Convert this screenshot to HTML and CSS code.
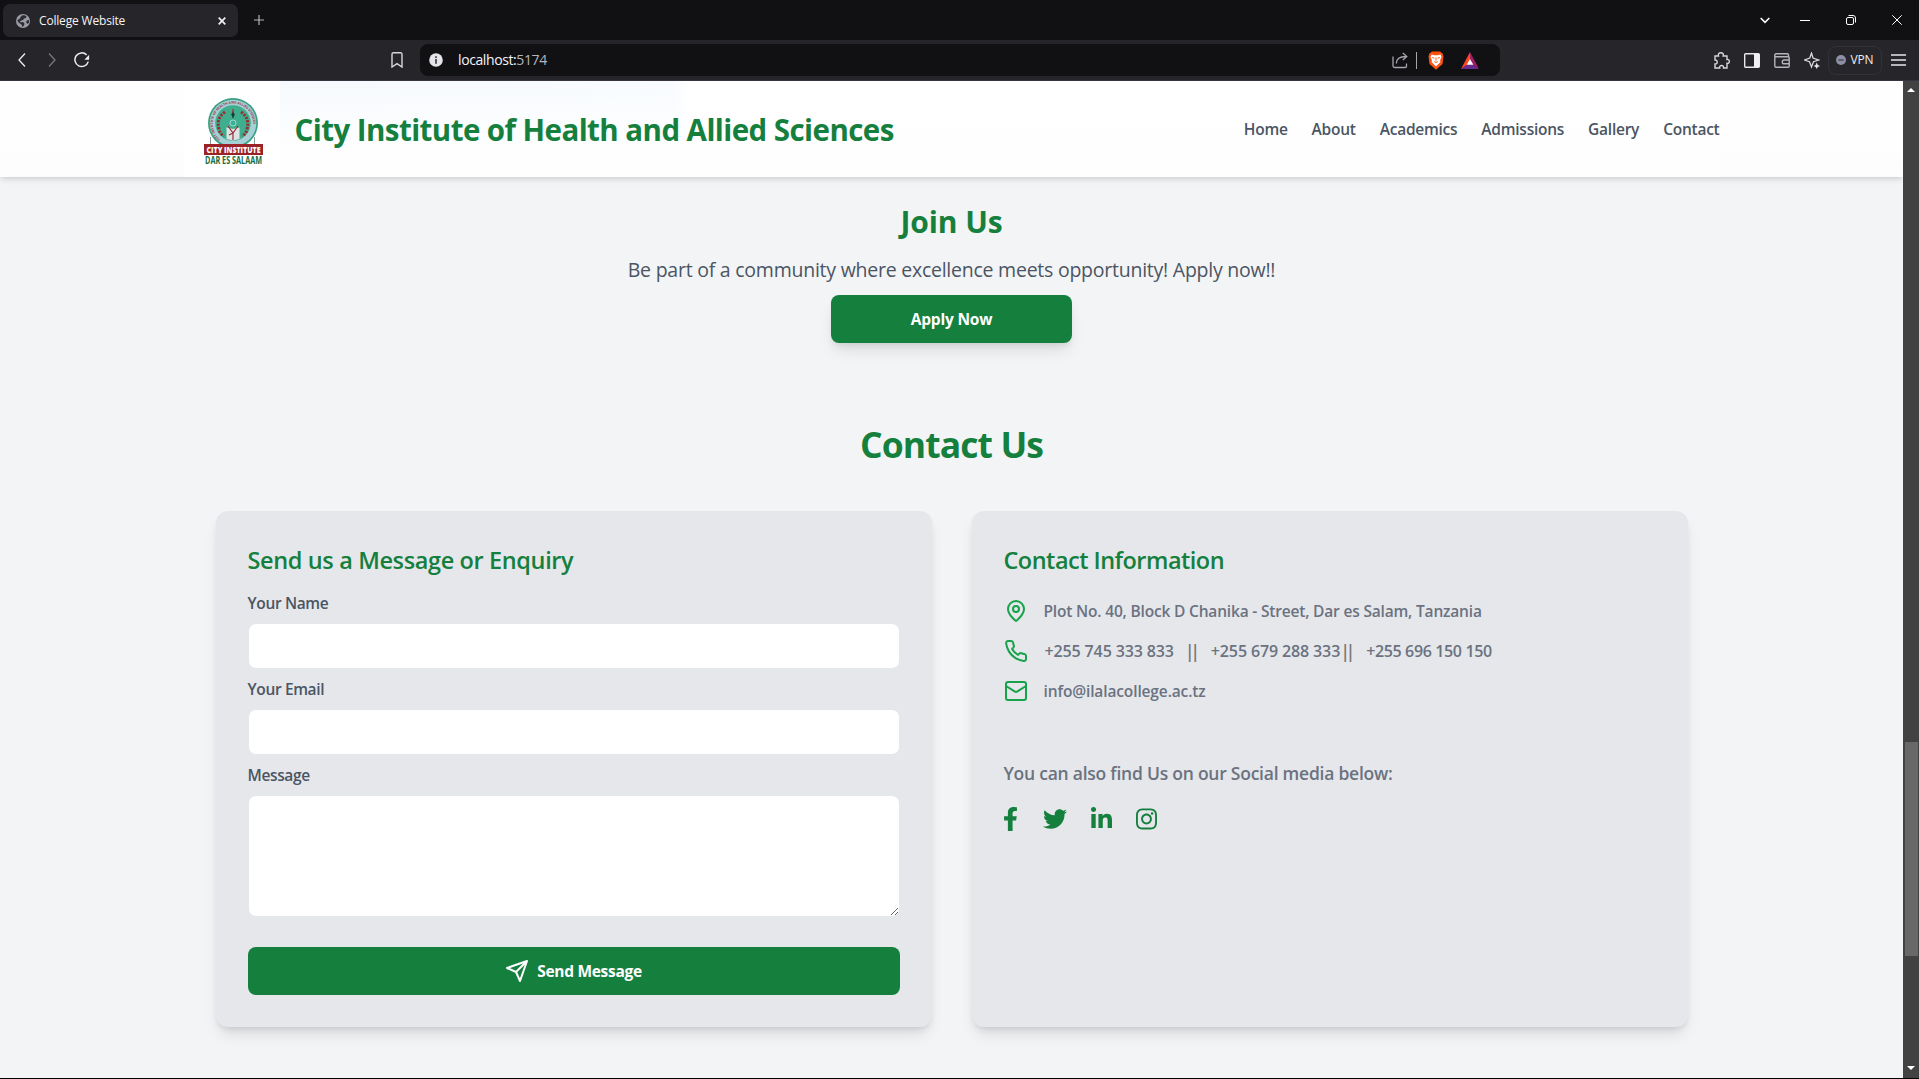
FILE: index.html
```html
<!DOCTYPE html>
<html lang="en">
<head>
<meta charset="utf-8">
<title>College Website</title>
<link rel="stylesheet" href="styles.css">
</head>
<body>
<div class="tabstrip">
  <div class="tab">
    <svg class="favicon" width="14" height="14" viewBox="0 0 14 14"><circle cx="7" cy="7" r="7" fill="#9a9ba3"/><path d="M6.500 1.200C8 1 9.600 1.500 10.500 2.200L10 4 8 4.500 7 6 4 7 4.500 8.500 7 8 8.500 9.500 8 11.500 6.500 13 5.500 10.500 2.500 8.500 1.200 6 3.500 5 4.500 3z M11 6.500l2-.5v2.500L11.500 10 10 8z" fill="#2b2b31"/></svg>
    <span class="tab-title">College Website</span>
    <svg class="tab-close" width="8" height="8" viewBox="0 0 8 8"><path d="M.7.7l6.600 6.600M7.300.7L.7 7.300" stroke="#f0f0f2" stroke-width="1.700"/></svg>
  </div>
  <svg class="new-tab" width="10" height="10" viewBox="0 0 10 10"><path d="M5 0v10M0 5h10" stroke="#b4b4ba" stroke-width="1.200"/></svg>
  <div class="window-controls">
    <svg width="10" height="7" viewBox="0 0 10 7"><path d="M.7 1L5 5.300 9.300 1" fill="none" stroke="#fff" stroke-width="1.600"/></svg>
    <svg width="10" height="10" viewBox="0 0 10 10"><path d="M0 5.500h10" stroke="#fff"/></svg>
    <svg width="10" height="10" viewBox="0 0 10 10" fill="none" stroke="#fff"><rect x=".5" y="2.500" width="7" height="7" rx="1.500"/><path d="M2.500.5H7a2.500 2.500 0 0 1 2.500 2.500v4.500"/></svg>
    <svg width="10" height="10" viewBox="0 0 10 10"><path d="M.3.3l9.400 9.400M9.700.3L.3 9.700" stroke="#fff"/></svg>
  </div>
</div>
<div class="toolbar">
  <div class="nav-buttons">
    <svg width="8" height="14" viewBox="0 0 8 14"><path d="M7 .5L1 7l6 6.500" fill="none" stroke="#f0f0f2" stroke-width="1.300"/></svg>
    <svg width="8" height="14" viewBox="0 0 8 14"><path d="M1 .5L7 7l-6 6.500" fill="none" stroke="#77777d" stroke-width="1.300"/></svg>
    <svg width="16" height="16" viewBox="0 0 15 15"><path d="M11.800 2.700A6.400 6.400 0 1 0 13.400 9" fill="none" stroke="#f0f0f2" stroke-width="1.400"/><path d="M14.200 2.500v4.800H9.800z" fill="#f0f0f2"/></svg>
  </div>
  <svg class="bookmark" width="12" height="16" viewBox="0 0 12 16"><path d="M1 2.200A1.400 1.400 0 0 1 2.400.8h7.200A1.400 1.400 0 0 1 11 2.200V15l-5-3.300L1 15z" fill="none" stroke="#d8d8dc" stroke-width="1.400"/></svg>
  <div class="address">
    <svg width="14" height="14" viewBox="0 0 14 14"><circle cx="7" cy="7" r="6.800" fill="#e6e6ea"/><path d="M7 3.200v1.800M7 6v4.700" stroke="#3c3c42" stroke-width="1.700"/></svg>
    <span class="url">localhost:<span class="port">5174</span></span>
    <div class="address-icons">
      <svg width="17" height="17" viewBox="0 0 17 17" fill="none" stroke="#a5a5ab" stroke-width="1.300"><path d="M1 4.500v9.300A1.700 1.700 0 0 0 2.700 15.500h10.600a1.200 1.200 0 0 0 1.200-1.200V11.500M4.300 11.500c0-4.700 3-7 9.700-7M10.800 1l4 3.500-4 3.500"/></svg>
      <span class="divider"></span>
      <svg width="16" height="19" viewBox="0 0 16 19"><path d="M4 .5h8L14.200 2.300 15.500 5 14.500 13 8 18.700 1.500 13 .5 5 1.800 2.300z" fill="#fb5210"/><path d="M3.500 3.500l3 .8h3l3-.8 1 2.500-1.500 3.500.5 1.500L8 15.500 3.500 11l.5-1.500L2.500 6z" fill="#fff"/><path d="M4.300 6.500l2 .7M11.700 6.500l-2 .7M8 6.500v3M6.300 10.500L8 11.500l1.700-1" stroke="#fb5210" fill="none"/></svg>
      <svg width="18" height="17" viewBox="0 0 18 17"><path d="M9 0L0 17l9-6z" fill="#ff4724"/><path d="M9 0l9 17-9-6z" fill="#9e1f63"/><path d="M0 17h18l-9-6z" fill="#662d91"/><path d="M9 7l3.300 5.800H5.700z" fill="#fff"/></svg>
    </div>
  </div>
  <div class="extensions">
    <svg width="16" height="17" viewBox="0 0 16 17"><path d="M1 4h3.500C3.800 1.800 5 .8 6.800.8S9.800 1.800 9.200 4H13v3.500c1.500-.4 2.300.5 2.300 1.900S14.500 11.700 13 11.300V16H9.500c.3-1.700-.5-2.500-1.900-2.500S5.300 14.300 5.700 16H1v-4c1.500.2 2.200-.7 2.200-2S2.500 7.800 1 8z" fill="none" stroke="#d8d8dc" stroke-width="1.400"/></svg>
    <svg width="16" height="15" viewBox="0 0 16 15"><rect x=".7" y=".7" width="14.600" height="13.600" rx="1" fill="none" stroke="#e8e8ec" stroke-width="1.400"/><path d="M10 1h5.500v13H10z" fill="#f0f0f2"/></svg>
    <svg width="16" height="15" viewBox="0 0 16 15" fill="none" stroke="#b4b4ba" stroke-width="1.400"><path d="M14.500 4V2A1.200 1.200 0 0 0 13.300.8H2A1.200 1.200 0 0 0 .8 2v11A1.200 1.200 0 0 0 2 14.200h12A1.200 1.200 0 0 0 15.200 13V5A1.200 1.200 0 0 0 14 3.800H1M15 7h-4.800a1.900 1.900 0 0 0 0 3.800H15"/></svg>
    <svg width="16" height="17" viewBox="0 0 16 17"><path d="M7.500 1L9 6l5.500 2-5 1.700L7.500 15l-2-5.300-5-1.700 5.300-2z" fill="none" stroke="#d8d8dc" stroke-width="1.300"/><path d="M12.700 10.500l1 2.500 2.300 1-2.300.9-1 2.100-1-2.100-2-.9 2-1z" fill="#e8e8ec"/></svg>
    <div class="vpn"><svg width="10" height="10" viewBox="0 0 10 10"><circle cx="5" cy="5" r="5" fill="#8d8fa6"/><path d="M2.300 5h5.400" stroke="#3c3c48" stroke-width="1.200"/></svg><span>VPN</span></div>
    <svg width="15" height="12" viewBox="0 0 15 12"><path d="M0 1h15M0 6h15M0 11h15" stroke="#e8e8ec" stroke-width="1.300"/></svg>
  </div>
</div>
<div class="viewport">
  <div class="page">
    <header class="site-header">
      <div class="header-inner">
        <div class="logo">
          <svg width="96" height="96" viewBox="0 0 96 96">
            <path d="M26.500 56v9M70.500 56v9" stroke="#8d9a98" stroke-width="1"/>
            <circle cx="49" cy="42" r="25" fill="#37a183"/>
            <circle cx="49" cy="42" r="23.300" fill="#a6cfd6"/>
            <circle cx="49" cy="42" r="17.800" fill="#3fae8f"/>
            <path id="ring" d="M36 58.200A20.200 20.200 0 1 1 62 58.200" fill="none"/>
            <text class="ring-text"><textPath href="#ring">CITY INSTITUTE OF HEALTH AND ALLIED SCIENCES</textPath></text>
            <path d="M41 31Q32 37 35 48Q36 53 40 55M57 31Q66 37 63 48Q62 53 58 55" fill="none" stroke="#9a2b30" stroke-width="3" stroke-dasharray="2.200 1.300"/>
            <path d="M42.500 46.500l6.500 1.500 6.500-1.500V58l-6.500 1.500L42.500 58z" fill="#dde4e6"/>
            <path d="M44 45l5 7 5-7M49 52v7M45 54l4-2" fill="none" stroke="#9a2b30" stroke-width="1.200"/>
            <circle cx="49" cy="42" r="3" fill="none" stroke="#9bd5dc"/>
            <path d="M49 30l-1.700 3.500L49 38l1.700-4.500z" fill="#1d3b35"/><path d="M49 28v4" stroke="#b3282d" stroke-width="1.200"/>
            <path d="M20 63h59v11H20z" fill="#9b2226"/>
            <text class="logo-name" x="49.500" y="71.800" textLength="54" lengthAdjust="spacingAndGlyphs">CITY INSTITUTE</text>
            <text class="logo-place" x="49.500" y="83.400" textLength="57" lengthAdjust="spacingAndGlyphs">DAR ES SALAAM</text>
          </svg>
        </div>
        <h1 class="site-title">City Institute of Health and Allied Sciences</h1>
        <nav class="site-nav"><a>Home</a><a>About</a><a>Academics</a><a>Admissions</a><a>Gallery</a><a>Contact</a></nav>
      </div>
    </header>
    <section class="join">
      <h2 class="join-title">Join Us</h2>
      <p class="join-text">Be part of a community where excellence meets opportunity! Apply now!!</p>
      <button class="apply">Apply Now</button>
    </section>
    <section class="contact">
      <h2 class="contact-title">Contact Us</h2>
      <div class="cards">
        <form class="card">
          <h3 class="card-title">Send us a Message or Enquiry</h3>
          <label class="label">Your Name</label>
          <input class="field" type="text">
          <label class="label">Your Email</label>
          <input class="field" type="email">
          <label class="label">Message</label>
          <textarea class="field area"></textarea>
          <button class="send" type="button">
            <svg width="24" height="24" viewBox="0 0 24 24" fill="none" stroke="#fff" stroke-width="2" stroke-linecap="round" stroke-linejoin="round"><path d="M22 2L15 22l-4-9-9-4zM22 2L11 13"/></svg>
            <span>Send Message</span>
          </button>
        </form>
        <div class="card">
          <h3 class="card-title info-title">Contact Information</h3>
          <div class="info">
            <div class="row"><svg class="ico" viewBox="0 0 24 24"><path d="M20 10c0 6-8 12-8 12s-8-6-8-12a8 8 0 0 1 16 0z"/><circle cx="12" cy="10" r="3"/></svg><span class="street">Plot No. 40, Block D Chanika - Street, Dar es Salam, Tanzania</span></div>
            <div class="row"><svg class="ico" viewBox="0 0 24 24"><path d="M22 16.920v3a2 2 0 0 1-2.180 2 19.790 19.790 0 0 1-8.630-3.070 19.500 19.500 0 0 1-6-6 19.790 19.790 0 0 1-3.070-8.670A2 2 0 0 1 4.110 2h3a2 2 0 0 1 2 1.720 12.840 12.840 0 0 0 .7 2.810 2 2 0 0 1-.45 2.110L8.090 9.910a16 16 0 0 0 6 6l1.270-1.270a2 2 0 0 1 2.110-.45 12.840 12.840 0 0 0 2.810.7A2 2 0 0 1 22 16.920z"/></svg><span class="phone">+255 745 333 833</span><span class="bars wide">||</span><span class="phone">+255 679 288 333</span><span class="bars">||</span><span class="phone last">+255 696 150 150</span></div>
            <div class="row"><svg class="ico" viewBox="0 0 24 24"><rect x="2" y="3" width="20" height="18" rx="2"/><path d="M22 7l-8.970 5.700a1.940 1.940 0 0 1-2.060 0L2 7"/></svg><span class="mail">info@ilalacollege.ac.tz</span></div>
          </div>
          <p class="social-text">You can also find Us on our Social media below:</p>
          <div class="social">
            <svg width="15" height="24" viewBox="0 0 320 512"><path d="M279.140 288l14.220-92.660h-88.910v-60.130c0-25.350 12.420-50.060 52.240-50.060h40.420V6.260S260.430 0 225.360 0c-73.220 0-121.080 44.380-121.080 124.720v70.620H22.890V288h81.390v224h100.170V288z"/></svg>
            <svg width="24" height="24" viewBox="0 0 512 512"><path d="M459.370 151.716c.325 4.548.325 9.097.325 13.645 0 138.720-105.583 298.558-298.558 298.558-59.452 0-114.680-17.219-161.137-47.106 8.447.974 16.568 1.299 25.340 1.299 49.055 0 94.213-16.568 130.274-44.832-46.132-.975-84.792-31.188-98.112-72.772 6.498.974 12.995 1.624 19.818 1.624 9.421 0 18.843-1.300 27.614-3.573-48.081-9.747-84.143-51.980-84.143-102.985v-1.299c13.969 7.797 30.214 12.670 47.431 13.319-28.264-18.843-46.781-51.005-46.781-87.391 0-19.492 5.197-37.360 14.294-52.954 51.655 63.675 129.300 105.258 216.365 109.807-1.624-7.797-2.599-15.918-2.599-24.040 0-57.828 46.782-104.934 104.934-104.934 30.213 0 57.502 12.670 76.670 33.137 23.715-4.548 46.456-13.320 66.599-25.340-7.798 24.366-24.366 44.833-46.132 57.827 21.117-2.273 41.584-8.122 60.426-16.243-14.292 20.791-32.161 39.308-52.628 54.253z"/></svg>
            <svg width="21" height="24" viewBox="0 0 448 512"><path d="M100.280 448H7.400V148.900h92.880zM53.790 108.100C24.090 108.100 0 83.500 0 53.800a53.790 53.790 0 0 1 107.580 0c0 29.700-24.100 54.300-53.790 54.300zM447.900 448h-92.680V302.400c0-34.700-.7-79.200-48.290-79.200-48.290 0-55.690 37.700-55.690 76.700V448h-92.780V148.900h89.080v40.800h1.300c12.400-23.500 42.690-48.300 87.880-48.300 94 0 111.280 61.900 111.280 142.300V448z"/></svg>
            <svg width="21" height="24" viewBox="0 0 448 512"><path d="M224.100 141c-63.600 0-114.900 51.300-114.900 114.900s51.300 114.900 114.900 114.900S339 319.500 339 255.900 287.700 141 224.100 141zm0 189.600c-41.100 0-74.700-33.500-74.700-74.700s33.500-74.700 74.700-74.700 74.700 33.500 74.700 74.700-33.600 74.700-74.700 74.700zm146.400-194.300c0 14.900-12 26.800-26.800 26.800-14.900 0-26.800-12-26.800-26.800s12-26.800 26.800-26.800 26.800 12 26.800 26.800zm76.100 27.200c-1.700-35.900-9.900-67.700-36.200-93.900-26.200-26.200-58-34.400-93.900-36.200-37-2.100-147.900-2.100-184.900 0-35.800 1.700-67.600 9.900-93.900 36.100s-34.400 58-36.200 93.900c-2.100 37-2.100 147.900 0 184.900 1.700 35.900 9.900 67.700 36.200 93.900s58 34.400 93.900 36.200c37 2.100 147.900 2.100 184.900 0 35.900-1.700 67.700-9.900 93.900-36.200 26.200-26.200 34.400-58 36.200-93.900 2.100-37 2.100-147.800 0-184.800zM398.800 388c-7.800 19.600-22.900 34.700-42.600 42.600-29.500 11.700-99.500 9-132.100 9s-102.700 2.600-132.100-9c-19.600-7.800-34.700-22.900-42.600-42.600-11.700-29.500-9-99.500-9-132.100s-2.600-102.700 9-132.100c7.800-19.600 22.900-34.700 42.600-42.600 29.500-11.700 99.500-9 132.100-9s102.700-2.600 132.100 9c19.600 7.800 34.700 22.900 42.600 42.600 11.700 29.500 9 99.500 9 132.100s2.700 102.700-9 132.100z"/></svg>
          </div>
        </div>
      </div>
    </section>
  </div>
  <div class="scrollbar">
    <svg width="8" height="4" viewBox="0 0 8 4"><path d="M4 0l4 4H0z" fill="#fff"/></svg>
    <div class="thumb"></div>
    <svg class="down" width="8" height="4" viewBox="0 0 8 4"><path d="M0 0h8L4 4z" fill="#fff"/></svg>
  </div>
</div>
</body>
</html>
```
FILE: styles.css
```css
* { box-sizing: border-box; margin: 0; padding: 0; }
body {
  width: 1919px; height: 1079px; overflow: hidden;
  display: flex; flex-direction: column;
  font-family: "Open Sans", "Noto Sans", sans-serif;
  font-size: 16px; line-height: 24px;
  color: #4b5563; background: #000;
}
svg { display: block; flex: none; }
button { border: 0; font: inherit; color: inherit; }

/* Browser window */
.tabstrip { height: 40px; flex: none; display: flex; align-items: center; background: #111113; padding: 0 17px 0 3px; }
.tab { width: 235px; height: 33px; margin-top: 1px; padding: 0 12px 0 13px; border-radius: 7px; background: #26252a; display: flex; align-items: center; }
.tab-title { margin-left: 9px; font-size: 12px; letter-spacing: -0.18px; color: #f4f4f6; }
.tab-close { margin-left: auto; }
.new-tab { margin-left: 16px; }
.window-controls { margin-left: auto; display: flex; align-items: center; }
.window-controls svg + svg { margin-left: 30px; }
.window-controls svg:nth-child(3) { margin-left: 36px; }
.window-controls svg:nth-child(4) { margin-left: 36px; }
.toolbar { height: 41px; flex: none; display: flex; align-items: center; background: #26252a; border-bottom: 1px solid #37343d; padding: 0 13px 0 18px; }
.nav-buttons { display: flex; align-items: center; gap: 22px; }
.nav-buttons svg:last-child { margin-left: -4px; }
.bookmark { margin-left: 301px; }
.address { width: 1080px; height: 32px; margin-left: 17px; padding: 0 21px 0 9px; border-radius: 8px; background: #111113; display: flex; align-items: center; }
.url { margin-left: 15px; font-size: 14px; letter-spacing: -0.4px; color: #f4f4f6; }
.port { color: #b6b6bc; }
.address-icons { margin-left: auto; display: flex; align-items: center; }
.divider { width: 1px; height: 17px; margin: 0 11px 0 7px; background: #a5a5ab; }
.address-icons svg:last-child { margin-left: 17px; }
.extensions { margin-left: auto; display: flex; align-items: center; gap: 14px; }
.vpn { width: 54px; height: 29px; margin: 0 -5px 0 -6px; border: 1px solid #333238; border-radius: 8px; display: flex; align-items: center; justify-content: center; gap: 4px; font-size: 12px; letter-spacing: -0.1px; color: #eeeef0; }

.viewport { flex: none; height: 997px; display: flex; }
.page { width: 1903px; background: #f3f4f6; overflow: hidden; }
.scrollbar { width: 16px; background: #424242; display: flex; flex-direction: column; align-items: center; padding: 7px 0 8px; }
.thumb { width: 13px; height: 214px; margin: 650px 0 0 1px; background: #686868; }
.down { margin-top: auto; }

/* Header */
.site-header { position: relative; height: 96px; background: linear-gradient(#fefefe 70%, #fcfcfd); box-shadow: 0 4px 6px -1px rgba(0,0,0,.1), 0 2px 4px -1px rgba(0,0,0,.06); }
.header-inner { width: 1536px; height: 96px; margin: 0 auto; display: flex; align-items: center; background: linear-gradient(180deg, rgba(254,254,255,0) 0, #fefefe 75%), linear-gradient(90deg, #fff 96px, #f6f9fd 96px, #f8fbff 490px, #fff 505px); }
.logo { width: 96px; height: 96px; background: #fff; }
.ring-text { font: 700 3.300px "Open Sans", sans-serif; fill: #9b2f3c; }
.logo-name, .logo-place { font: 800 9.500px "Open Sans", sans-serif; text-anchor: middle; fill: #fff; }
.logo-place { font-size: 10.500px; font-weight: 700; fill: #176d3c; }
.site-title { margin: 2px 0 0 15px; font-size: 29.5px; line-height: 36px; font-weight: 700; letter-spacing: -0.56px; color: #15803d; white-space: nowrap; }
.site-nav { margin: 0 0 0 auto; display: flex; gap: 24px; font-weight: 600; font-size: 15.5px; letter-spacing: -0.25px; }

/* Join */
.join { margin-top: 27px; display: flex; flex-direction: column; align-items: center; }
.join-title { font-size: 30px; line-height: 36px; font-weight: 700; letter-spacing: -0.1px; color: #15803d; }
.join-text { margin-top: 16px; font-size: 19.5px; line-height: 28px; letter-spacing: -0.24px; }
.apply { width: 241px; height: 48px; margin-top: 11px; border-radius: 8px; background: #15803d; color: #fff; font-weight: 700; font-size: 15.5px; letter-spacing: -0.2px; box-shadow: 0 10px 15px -3px rgba(0,0,0,.1), 0 4px 6px -2px rgba(0,0,0,.08); }

/* Contact */
.contact { margin-top: 81px; }
.contact-title { font-size: 35.5px; line-height: 40px; font-weight: 700; letter-spacing: -0.9px; text-align: center; color: #15803d; }
.cards { width: 1472px; margin: 47px auto 0; display: grid; grid-template-columns: 1fr 1fr; gap: 40px; }
.card { padding: 33px 32px 32px; border-radius: 12px; background: #e5e7eb; box-shadow: 0 10px 15px -3px rgba(0,0,0,.1), 0 4px 6px -2px rgba(0,0,0,.1); display: flex; flex-direction: column; }
.card-title { margin-bottom: 15px; font-size: 23.5px; line-height: 32px; font-weight: 600; letter-spacing: -0.37px; color: #15803d; }
.info-title { margin-bottom: 23px; letter-spacing: -0.52px; }
.label { margin-bottom: 8px; font-weight: 600; font-size: 15.5px; letter-spacing: -0.36px; }
.field { width: 100%; height: 46px; margin-bottom: 8px; border: 1px solid #e5e7eb; border-radius: 8px; background: #fff; outline: 0; }
.area { height: 122px; margin-bottom: 30px; resize: vertical; }
.send { height: 48px; border-radius: 8px; background: #15803d; color: #fff; font-weight: 700; font-size: 15.5px; letter-spacing: -0.3px; display: flex; align-items: center; justify-content: center; gap: 8px; }
.info { display: flex; flex-direction: column; gap: 16px; color: #6b7280; font-weight: 600; }
.row { height: 24px; display: flex; align-items: center; }
.ico { width: 24px; height: 24px; margin-right: 16px; fill: none; stroke: #16a34a; stroke-width: 2; stroke-linecap: round; stroke-linejoin: round; }
.street { font-size: 15.5px; letter-spacing: -0.18px; }
.phone { margin-left: 1px; letter-spacing: -0.13px; }
.last { letter-spacing: -0.36px; }
.bars { width: 13px; margin: 0 12px 0 0; font-weight: 600; font-size: 18px; letter-spacing: -4.6px; color: #777; }
.bars.wide { margin: 0 12px 0 11px; }
.mail { font-size: 15.5px; letter-spacing: -0.13px; }
.social-text { margin-top: 56px; font-size: 17.5px; line-height: 28px; font-weight: 600; letter-spacing: -0.24px; color: #6b7280; }
.social { margin-top: 20px; display: flex; gap: 24px; fill: #15803d; }
.social svg:first-child { margin: 0 0.5px 0 -0.5px; }
```
